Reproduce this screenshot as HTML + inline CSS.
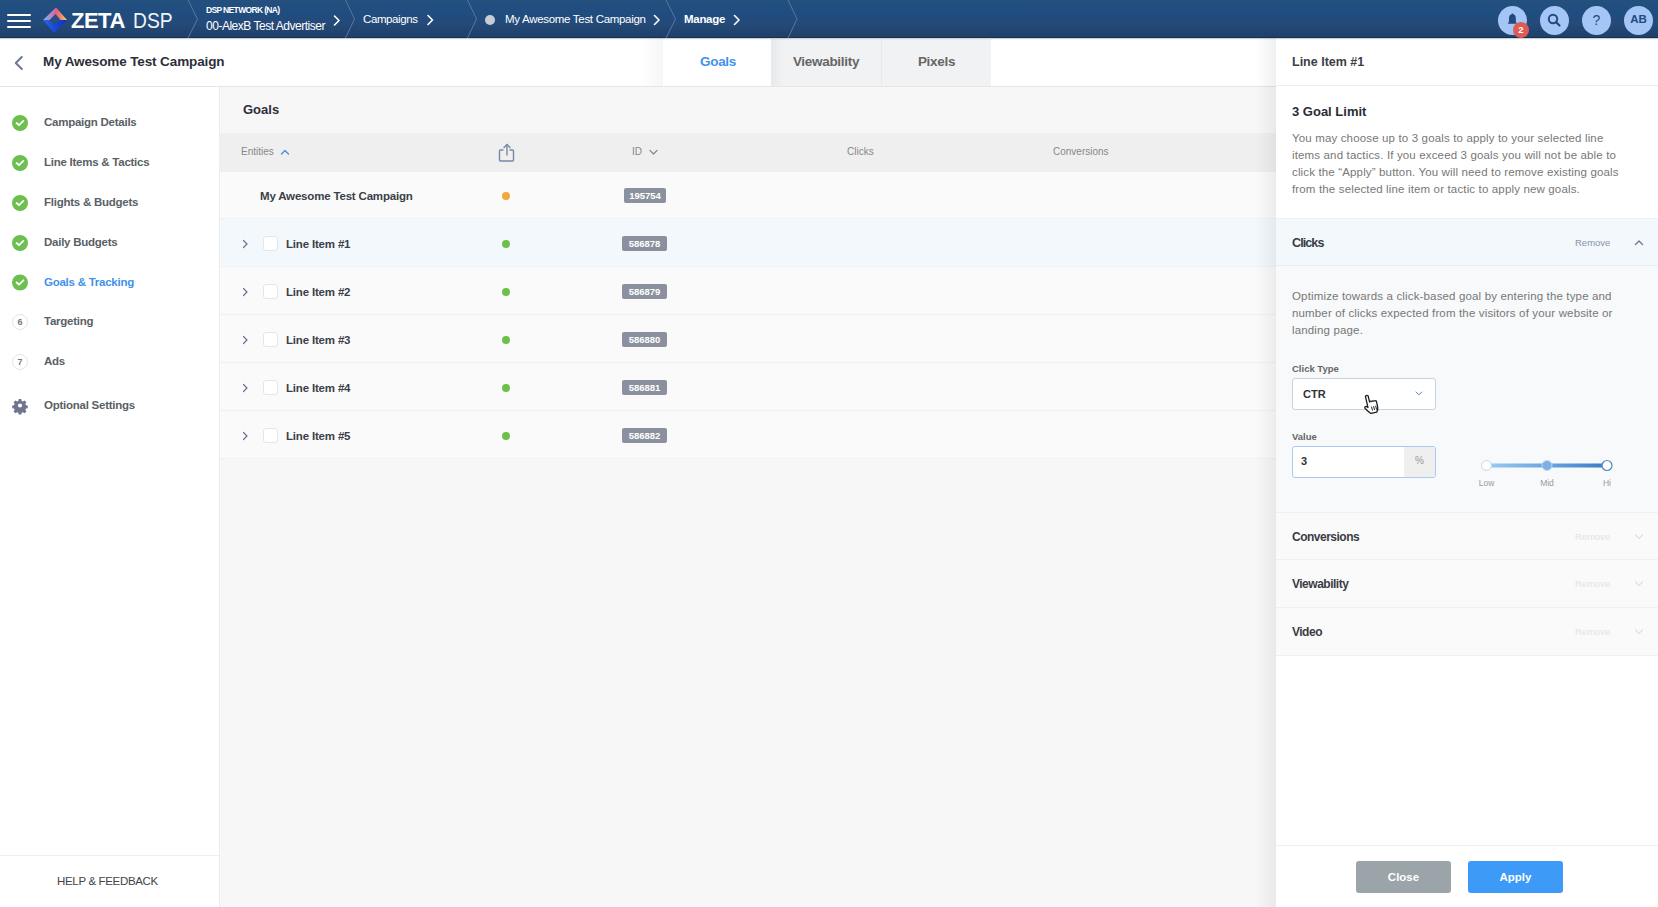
<!DOCTYPE html>
<html><head><meta charset="utf-8">
<style>
*{box-sizing:border-box;margin:0;padding:0}
html,body{width:1658px;height:907px;overflow:hidden;background:#f7f7f7;font-family:"Liberation Sans",sans-serif;}
.abs{position:absolute}
.t{position:absolute;white-space:nowrap;line-height:1}
/* header */
#hdr{position:absolute;left:0;top:0;width:1658px;height:38px;background:linear-gradient(to bottom,#24507f 0%,#1f4d80 35%,#254a78 65%,#1f416b 95%);border-bottom:1px solid #1c2d47;box-shadow:0 1px 1px rgba(40,70,120,0.25);z-index:2}
.ham{position:absolute;left:7px;width:24px;height:2px;background:#fff;border-radius:1px}
.sep{position:absolute;top:0}
.crumb{color:#fff}
.icon{position:absolute;top:6px;width:29px;height:29px;border-radius:50%;background:#a3c6f6}
/* subheader */
#sub{position:absolute;left:0;top:38px;width:1276px;height:49px;background:#fff;border-bottom:1px solid #e6e6e6}
.tab{position:absolute;top:39px;height:47px;width:110px;background:#f1f2f3;text-align:center;font-size:13.5px;font-weight:bold;color:#666;line-height:45.5px;letter-spacing:-0.3px}
/* sidebar */
#side{position:absolute;left:0;top:87px;width:220px;height:820px;background:#fff;border-right:1px solid #ececec}
.nav{position:absolute;left:44px;font-size:11.5px;font-weight:bold;color:#5a5f66;white-space:nowrap;line-height:1;letter-spacing:-0.25px}
.chk{position:absolute;left:12px;width:16px;height:16px;border-radius:50%;background:#6dbf4e}
.num{position:absolute;left:12px;width:16px;height:16px;border-radius:50%;border:1px solid #e2e2e2;font-size:8.5px;color:#777;text-align:center;line-height:14px}
/* main */
#main{position:absolute;left:220px;top:87px;width:1056px;height:820px;background:#f7f7f7}
.row{position:absolute;left:220px;width:1056px;height:48px;background:#fafafa;border-bottom:1px solid #f1f1f1}
.rtxt{position:absolute;font-size:11.5px;font-weight:bold;color:#3a3f48;white-space:nowrap;line-height:1;letter-spacing:-0.18px}
.dot{position:absolute;left:501.5px;width:8px;height:8px;border-radius:50%;background:#6cc04a}
.badge{position:absolute;height:15px;background:#8a909d;border-radius:2px;color:#fff;font-size:9.5px;font-weight:bold;line-height:15px;text-align:center}
.cb{position:absolute;left:262.5px;width:15px;height:15px;border-radius:3px;background:#fff;border:1px solid #e6e6e6;margin-top:-0.5px}
.exp{position:absolute;left:241px}
/* panel */
#panel{position:absolute;left:1276px;top:38px;width:382px;height:869px;background:#fff}
#shadow{position:absolute;left:1256px;top:38px;width:20px;height:869px;background:linear-gradient(to right,rgba(0,0,0,0),rgba(0,0,0,0.06))}
.ptxt{position:absolute;font-size:11.5px;color:#777;line-height:17px;white-space:nowrap;letter-spacing:0.15px}
.acc{position:absolute;left:1276px;width:382px;height:48px;background:#fafafa;border-bottom:1px solid #f0f0f0}
.acct{position:absolute;left:16px;top:18px;font-size:12px;font-weight:bold;color:#3a3d45;line-height:1;letter-spacing:-0.5px}
.rem{position:absolute;left:299px;top:18.5px;font-size:9.5px;color:#e3e3e3;line-height:1}
</style></head><body>

<!-- HEADER -->
<div id="hdr">
  <div class="ham" style="top:14px"></div>
  <div class="ham" style="top:20px"></div>
  <div class="ham" style="top:26px"></div>
  <svg class="abs" style="left:0;top:0" width="80" height="38">
    <defs>
      <linearGradient id="lgt" x1="43" y1="0" x2="67" y2="0" gradientUnits="userSpaceOnUse">
        <stop offset="0" stop-color="#6eb0f5"/><stop offset="0.3" stop-color="#b48ac8"/><stop offset="0.55" stop-color="#e35d86"/><stop offset="0.75" stop-color="#ee8a6a"/><stop offset="1" stop-color="#f7dc50"/>
      </linearGradient>
      <linearGradient id="lgb" x1="43" y1="0" x2="67" y2="0" gradientUnits="userSpaceOnUse">
        <stop offset="0" stop-color="#2a68e0"/><stop offset="1" stop-color="#0a2ad2"/>
      </linearGradient>
    </defs>
    <polygon points="43,20 56,7.5 67,20" fill="url(#lgt)"/>
    <polygon points="43,20 67,20 54,33" fill="url(#lgb)"/>
    <polygon points="49.5,20 55.5,14 60.5,20 54.5,25.5" fill="#244f80"/>
  </svg>
  <div class="t" style="left:71px;top:10px;font-size:22px;font-weight:bold;color:#fff;letter-spacing:-0.5px">ZETA</div>
  <div class="t" style="left:133px;top:10px;font-size:22px;color:#f2f4f8;transform:scaleX(0.875);transform-origin:0 0">DSP</div>
  <!-- separators -->
  <svg class="abs" style="left:0;top:0" width="1658" height="38">
    <g fill="none" stroke="#5876a0" stroke-width="1">
      <polyline points="188,0 197.5,19 188,38"/>
      <polyline points="345.5,0 354.5,19 345.5,38"/>
      <polyline points="467.5,0 476.5,19 467.5,38"/>
      <polyline points="666,0 675.5,19 666,38"/>
      <polyline points="788,0 797,19 788,38"/>
    </g>
    <g fill="none" stroke="#fff" stroke-width="1.6" stroke-linecap="round" stroke-linejoin="round">
      <polyline points="334.5,16 339,20.5 334.5,25"/>
      <polyline points="428,15.5 432.5,20 428,24.5"/>
      <polyline points="654.5,15.5 659,20 654.5,24.5"/>
      <polyline points="734.5,15.5 739,20 734.5,24.5"/>
    </g>
    <circle cx="490" cy="20" r="5" fill="#c9cdd3"/>
  </svg>
  <div class="t crumb" style="left:206px;top:6px;font-size:8.5px;font-weight:bold;letter-spacing:-0.65px">DSP NETWORK (NA)</div>
  <div class="t crumb" style="left:206px;top:20px;font-size:12px;letter-spacing:-0.48px">00-AlexB Test Advertiser</div>
  <div class="t crumb" style="left:363px;top:14px;font-size:11.5px;letter-spacing:-0.4px">Campaigns</div>
  <div class="t crumb" style="left:505px;top:14px;font-size:11.5px;letter-spacing:-0.3px">My Awesome Test Campaign</div>
  <div class="t crumb" style="left:684px;top:14px;font-size:11.5px;font-weight:bold;letter-spacing:-0.3px">Manage</div>
  <!-- icons -->
  <div class="icon" style="left:1498px"></div>
  <div class="icon" style="left:1540px"></div>
  <div class="icon" style="left:1582px"></div>
  <div class="icon" style="left:1624px"></div>
  <svg class="abs" style="left:1498px;top:6px" width="29" height="29" viewBox="0 0 29 29">
    <path d="M9.6 17.8 Q11 16.8 11 14.5 V12.3 Q11 8.3 14.4 8.2 Q17.8 8.3 17.8 12.3 V14.5 Q17.8 16.8 19.2 17.8Z" fill="#224a7c"/>
    <circle cx="14.5" cy="8.6" r="1" fill="#224a7c"/>
  </svg>
  <div class="abs" style="left:1513px;top:22px;width:16px;height:16px;border-radius:50%;background:#de5b55;color:#fff;font-size:9.5px;font-weight:bold;text-align:center;line-height:16px">2</div>
  <svg class="abs" style="left:1540px;top:6px" width="29" height="29" viewBox="0 0 29 29">
    <circle cx="13" cy="13" r="4.2" fill="none" stroke="#224a7c" stroke-width="2"/>
    <line x1="16" y1="16" x2="19.5" y2="19.5" stroke="#224a7c" stroke-width="2.2" stroke-linecap="round"/>
  </svg>
  <div class="t" style="left:1582px;top:13px;width:29px;text-align:center;font-size:14px;color:#224a7c">?</div>
  <div class="t" style="left:1624px;top:14px;width:29px;text-align:center;font-size:11.5px;font-weight:bold;color:#224a7c">AB</div>
</div>

<!-- SUBHEADER -->
<div id="sub"></div>
<div class="t" style="left:43px;top:55px;font-size:13.5px;font-weight:bold;color:#2d2e3a;letter-spacing:-0.12px">My Awesome Test Campaign</div>
<div class="abs" style="left:640px;top:38px;width:23px;height:48px;background:linear-gradient(to right,rgba(0,0,0,0),rgba(0,0,0,0.035))"></div>
<div class="tab" style="left:663px;background:#fff;color:#3f93ec">Goals</div>
<div class="tab" style="left:771px">Viewability</div>
<div class="abs" style="left:771px;top:39px;width:12px;height:47px;background:linear-gradient(to right,rgba(0,0,0,0.04),rgba(0,0,0,0))"></div>
<div class="tab" style="left:881px;border-left:1px solid #e8e8e8">Pixels</div>

<svg class="abs" style="left:12px;top:54px" width="14" height="18" viewBox="0 0 14 18">
  <polyline points="9.8,3 3.8,9 9.8,15" fill="none" stroke="#6e7799" stroke-width="2" stroke-linecap="round" stroke-linejoin="round"/>
</svg>
<!-- SIDEBAR -->
<div id="side"></div>
<svg class="abs" style="left:0;top:0" width="40" height="420">
  <g fill="#6dbf4e">
    <circle cx="20" cy="123" r="8"/><circle cx="20" cy="163" r="8"/><circle cx="20" cy="203" r="8"/><circle cx="20" cy="243" r="8"/><circle cx="20" cy="282.5" r="8"/>
  </g>
  <g fill="none" stroke="#fff" stroke-width="1.8" stroke-linecap="round" stroke-linejoin="round">
    <polyline points="16.6,123 19,125.2 23.4,120.8"/>
    <polyline points="16.6,163 19,165.2 23.4,160.8"/>
    <polyline points="16.6,203 19,205.2 23.4,200.8"/>
    <polyline points="16.6,243 19,245.2 23.4,240.8"/>
    <polyline points="16.6,282.5 19,284.7 23.4,280.3"/>
  </g>
  <g fill="#fff" stroke="#e4e4e4" stroke-width="1">
    <circle cx="20" cy="322" r="7.5"/><circle cx="20" cy="362" r="7.5"/>
  </g>
  <text x="20" y="325.3" font-size="9" font-weight="bold" fill="#7a7a7a" text-anchor="middle" font-family="Liberation Sans">6</text>
  <text x="20" y="365.3" font-size="9" font-weight="bold" fill="#7a7a7a" text-anchor="middle" font-family="Liberation Sans">7</text>
  <g transform="translate(20,405.5) scale(0.8)" fill="#6f7590">
    <path d="M-1.6,-8 h3.2 l0.5,2.3 l1.6,0.7 l2,-1.3 l2.3,2.3 l-1.3,2 l0.7,1.6 l2.3,0.5 v3.2 l-2.3,0.5 l-0.7,1.6 l1.3,2 l-2.3,2.3 l-2,-1.3 l-1.6,0.7 l-0.5,2.3 h-3.2 l-0.5,-2.3 l-1.6,-0.7 l-2,1.3 l-2.3,-2.3 l1.3,-2 l-0.7,-1.6 l-2.3,-0.5 v-3.2 l2.3,-0.5 l0.7,-1.6 l-1.3,-2 l2.3,-2.3 l2,1.3 l1.6,-0.7z"/>
    <circle cx="0" cy="0" r="2.6" fill="#fff"/>
  </g>
</svg>
<div class="nav" style="top:117px">Campaign Details</div>
<div class="nav" style="top:157px">Line Items &amp; Tactics</div>
<div class="nav" style="top:197px">Flights &amp; Budgets</div>
<div class="nav" style="top:237px">Daily Budgets</div>
<div class="nav" style="top:277px;color:#3f92e8">Goals &amp; Tracking</div>
<div class="nav" style="top:316px">Targeting</div>
<div class="nav" style="top:356px">Ads</div>
<div class="nav" style="top:400px">Optional Settings</div>
<div class="abs" style="left:0;top:855px;width:219px;height:1px;background:#efefef"></div>
<div class="t" style="left:57px;top:876px;font-size:11.5px;color:#444;letter-spacing:-0.33px">HELP &amp; FEEDBACK</div>

<!-- MAIN -->
<div id="main"></div>
<div class="t" style="left:243px;top:103px;font-size:13px;font-weight:bold;color:#2d2e3a">Goals</div>
<div class="abs" style="left:220px;top:133px;width:1056px;height:39px;background:#efefef"></div>
<div class="t" style="left:241px;top:147px;font-size:10px;color:#888">Entities</div>
<svg class="abs" style="left:0;top:0" width="1276" height="470">
  <polyline points="281.5,154 285,150.5 288.5,154" fill="none" stroke="#4a90e2" stroke-width="1.4" stroke-linecap="round" stroke-linejoin="round"/>
  <polyline points="650,150.5 653.5,154 657,150.5" fill="none" stroke="#888" stroke-width="1.2" stroke-linecap="round" stroke-linejoin="round"/>
  <g fill="none" stroke="#7a87a8" stroke-width="1.4" stroke-linecap="round" stroke-linejoin="round">
    <path d="M503,150 h-2.5 q-1,0 -1,1 v9 q0,1 1,1 h12 q1,0 1,-1 v-9 q0,-1 -1,-1 h-2.5"/>
    <line x1="507" y1="144.5" x2="507" y2="155"/>
    <polyline points="504,147.5 507,144.5 510,147.5"/>
  </g>
</svg>
<div class="t" style="left:632px;top:147px;font-size:10px;color:#888">ID</div>
<div class="t" style="left:847px;top:147px;font-size:10px;color:#888">Clicks</div>
<div class="t" style="left:1053px;top:147px;font-size:10px;color:#888">Conversions</div>

<div class="row" style="top:172px;height:47px"></div>
<div class="row" style="top:219px;background:#f2f8fc"></div>
<div class="row" style="top:267px"></div>
<div class="row" style="top:315px"></div>
<div class="row" style="top:363px"></div>
<div class="row" style="top:411px"></div>

<div class="rtxt" style="left:260px;top:191px">My Awesome Test Campaign</div>
<div class="dot" style="top:191.5px;background:#f0a83a"></div>
<div class="badge" style="left:624px;top:188px;width:42px">195754</div>
<svg class="exp" style="top:239px" width="8" height="10"><polyline points="2.5,1.5 6,5 2.5,8.5" fill="none" stroke="#6b7090" stroke-width="1.2" stroke-linecap="round" stroke-linejoin="round"/></svg>
<div class="cb" style="top:236px"></div>
<div class="rtxt" style="left:286px;top:239px">Line Item #1</div>
<div class="dot" style="top:239.5px"></div>
<div class="badge" style="left:622px;top:236px;width:45px">586878</div>
<svg class="exp" style="top:287px" width="8" height="10"><polyline points="2.5,1.5 6,5 2.5,8.5" fill="none" stroke="#6b7090" stroke-width="1.2" stroke-linecap="round" stroke-linejoin="round"/></svg>
<div class="cb" style="top:284px"></div>
<div class="rtxt" style="left:286px;top:287px">Line Item #2</div>
<div class="dot" style="top:287.5px"></div>
<div class="badge" style="left:622px;top:284px;width:45px">586879</div>
<svg class="exp" style="top:335px" width="8" height="10"><polyline points="2.5,1.5 6,5 2.5,8.5" fill="none" stroke="#6b7090" stroke-width="1.2" stroke-linecap="round" stroke-linejoin="round"/></svg>
<div class="cb" style="top:332px"></div>
<div class="rtxt" style="left:286px;top:335px">Line Item #3</div>
<div class="dot" style="top:335.5px"></div>
<div class="badge" style="left:622px;top:332px;width:45px">586880</div>
<svg class="exp" style="top:383px" width="8" height="10"><polyline points="2.5,1.5 6,5 2.5,8.5" fill="none" stroke="#6b7090" stroke-width="1.2" stroke-linecap="round" stroke-linejoin="round"/></svg>
<div class="cb" style="top:380px"></div>
<div class="rtxt" style="left:286px;top:383px">Line Item #4</div>
<div class="dot" style="top:383.5px"></div>
<div class="badge" style="left:622px;top:380px;width:45px">586881</div>
<svg class="exp" style="top:431px" width="8" height="10"><polyline points="2.5,1.5 6,5 2.5,8.5" fill="none" stroke="#6b7090" stroke-width="1.2" stroke-linecap="round" stroke-linejoin="round"/></svg>
<div class="cb" style="top:428px"></div>
<div class="rtxt" style="left:286px;top:431px">Line Item #5</div>
<div class="dot" style="top:431.5px"></div>
<div class="badge" style="left:622px;top:428px;width:45px">586882</div>


<!-- PANEL -->
<div id="shadow"></div>
<div id="panel"></div>
<div class="t" style="left:1292px;top:56px;font-size:12.5px;font-weight:bold;color:#3d3e48">Line Item #1</div>
<div class="abs" style="left:1276px;top:85px;width:382px;height:1px;background:#ececec"></div>
<div class="t" style="left:1292px;top:104.5px;font-size:13px;font-weight:bold;color:#2b2c34">3 Goal Limit</div>
<div class="ptxt" style="left:1292px;top:130px">You may choose up to 3 goals to apply to your selected line<br>items and tactics. If you exceed 3 goals you will not be able to<br>click the &ldquo;Apply&rdquo; button. You will need to remove existing goals<br>from the selected line item or tactic to apply new goals.</div>

<!-- clicks accordion -->
<div class="abs" style="left:1276px;top:218px;width:382px;height:48px;background:#f2f8fc;border-top:1px solid #eef2f5;border-bottom:1px solid #e9eef2"></div>
<div class="t" style="left:1292px;top:236.5px;font-size:12.5px;font-weight:bold;color:#3a3d45;letter-spacing:-0.9px">Clicks</div>
<div class="t" style="left:1575px;top:238px;font-size:9.5px;color:#8a94a6">Remove</div>
<svg class="abs" style="left:1632px;top:236px" width="14" height="12"><polyline points="3.5,8.5 7,5 10.5,8.5" fill="none" stroke="#6a7590" stroke-width="1.3" stroke-linecap="round" stroke-linejoin="round"/></svg>
<div class="abs" style="left:1276px;top:266px;width:382px;height:246px;background:#f8f9fa"></div>
<div class="ptxt" style="left:1292px;top:288px">Optimize towards a click-based goal by entering the type and<br>number of clicks expected from the visitors of your website or<br>landing page.</div>
<div class="t" style="left:1292px;top:364px;font-size:9.5px;font-weight:bold;color:#666">Click Type</div>
<div class="abs" style="left:1292px;top:378px;width:144px;height:32px;background:#fff;border:1px solid #c8d3df;border-radius:3px"></div>
<div class="t" style="left:1303px;top:389px;font-size:11px;font-weight:bold;color:#333">CTR</div>
<svg class="abs" style="left:1412px;top:388px" width="14" height="10"><polyline points="4,4 7,6.8 10,4" fill="none" stroke="#6a8fbf" stroke-width="1" stroke-linecap="round" stroke-linejoin="round"/></svg>
<div class="t" style="left:1292px;top:432px;font-size:9.5px;font-weight:bold;color:#666">Value</div>
<div class="abs" style="left:1292px;top:446px;width:144px;height:32px;background:#fff;border:1px solid #a9c9ef;border-radius:3px;overflow:hidden">
  <div class="abs" style="left:111px;top:0;width:32px;height:30px;background:#efefef"></div>
</div>
<div class="t" style="left:1301px;top:456px;font-size:11px;font-weight:bold;color:#333">3</div>
<div class="t" style="left:1415px;top:456px;font-size:10px;color:#999">%</div>
<svg class="abs" style="left:1470px;top:450px" width="150" height="45">
  <defs><linearGradient id="trk" x1="0" x2="1"><stop offset="0" stop-color="#9ccaf3"/><stop offset="0.5" stop-color="#6aa6e0"/><stop offset="1" stop-color="#3a7cc4"/></linearGradient></defs>
  <rect x="16" y="13.5" width="121" height="4" rx="2" fill="url(#trk)"/>
  <circle cx="16.5" cy="15.5" r="5" fill="#fff" stroke="#b9dcf7" stroke-width="1"/>
  <circle cx="77" cy="15.5" r="5" fill="#7db1e6" stroke="#bcd9f3" stroke-width="1"/>
  <circle cx="137" cy="15.5" r="5" fill="#fff" stroke="#4f86c0" stroke-width="1.2"/>
  <text x="16.5" y="36" font-size="8.5" fill="#9a9a9a" text-anchor="middle" font-family="Liberation Sans">Low</text>
  <text x="77" y="36" font-size="8.5" fill="#9a9a9a" text-anchor="middle" font-family="Liberation Sans">Mid</text>
  <text x="137" y="36" font-size="8.5" fill="#9a9a9a" text-anchor="middle" font-family="Liberation Sans">Hi</text>
</svg>
<!-- cursor -->
<svg class="abs" style="left:1360px;top:393px" width="24" height="22" viewBox="0 0 24 22">
  <g transform="rotate(-13 12 12)">
  <path d="M7.5 2.2 q1.4,-1.4 2.8,0 v6.3 q1.1,-1.1 2.3,0 q1.1,-0.9 2.3,0.2 q1.2,-0.7 2.2,0.5 v5.6 q0,3.2 -2.1,5.2 h-6 q-1.6,-1.6 -4.3,-5.8 q-0.9,-1.6 0.5,-2.2 q1.1,-0.2 1.8,0.8 l0.5,0.7z" fill="#fff" stroke="#1e1e1e" stroke-width="1.3" stroke-linejoin="round"/>
  <line x1="11.2" y1="13.5" x2="11.2" y2="17.5" stroke="#1e1e1e" stroke-width="0.9"/>
  <line x1="13.3" y1="13.5" x2="13.3" y2="17.5" stroke="#1e1e1e" stroke-width="0.9"/>
  <line x1="15.4" y1="13.5" x2="15.4" y2="17.5" stroke="#1e1e1e" stroke-width="0.9"/>
  </g>
</svg>

<div class="acc" style="top:512px;border-top:1px solid #f0f0f0"><div class="acct">Conversions</div><div class="rem">Remove</div><svg class="abs" style="left:356px;top:18px" width="14" height="12"><polyline points="3.5,4 7,7.5 10.5,4" fill="none" stroke="#e2e2e2" stroke-width="1.2" stroke-linecap="round" stroke-linejoin="round"/></svg></div>
<div class="acc" style="top:560px"><div class="acct">Viewability</div><div class="rem">Remove</div><svg class="abs" style="left:356px;top:18px" width="14" height="12"><polyline points="3.5,4 7,7.5 10.5,4" fill="none" stroke="#e2e2e2" stroke-width="1.2" stroke-linecap="round" stroke-linejoin="round"/></svg></div>
<div class="acc" style="top:608px"><div class="acct">Video</div><div class="rem">Remove</div><svg class="abs" style="left:356px;top:18px" width="14" height="12"><polyline points="3.5,4 7,7.5 10.5,4" fill="none" stroke="#e2e2e2" stroke-width="1.2" stroke-linecap="round" stroke-linejoin="round"/></svg></div>

<div class="abs" style="left:1276px;top:845px;width:382px;height:1px;background:#efefef"></div>
<div class="abs" style="left:1356px;top:861px;width:95px;height:32px;background:#9aa4a9;border-radius:3px;color:#fff;font-size:11.5px;font-weight:bold;text-align:center;line-height:32px">Close</div>
<div class="abs" style="left:1468px;top:861px;width:95px;height:32px;background:#3d9af6;border-radius:3px;color:#fff;font-size:11.5px;font-weight:bold;text-align:center;line-height:32px">Apply</div>

</body></html>
